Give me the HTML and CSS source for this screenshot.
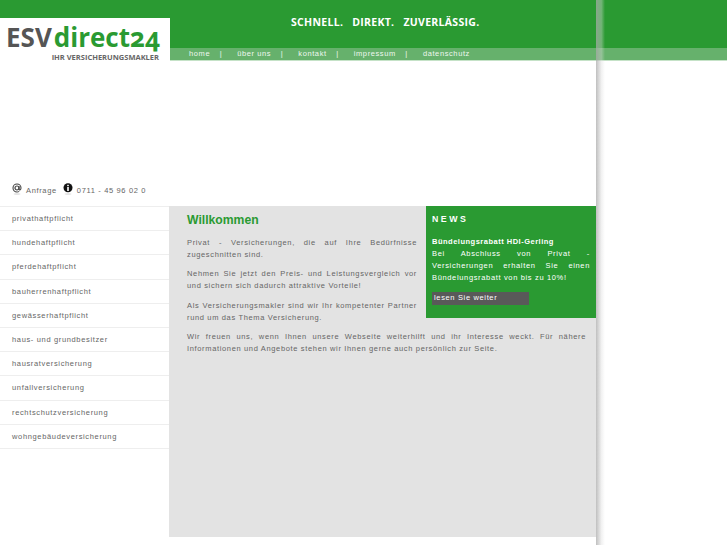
FILE: index.html
```html
<!DOCTYPE html>
<html lang="de">
<head>
    <meta charset="UTF-8">
    <meta name="viewport" content="width=device-width, initial-scale=1.0">
    <title>ESVdirect24</title>
    <link rel="stylesheet" href="styles.css">
</head>
<body>

    <div class="top">
        <div class="logo">
            <div class="logo-name"><span class="logo-esv">ESV</span><span class="logo-direct">direct24</span></div>
            <div class="logo-sub">IHR VERSICHERUNGSMAKLER</div>
        </div>
        <div class="top-right">
            <div class="slogan">SCHNELL.<span>DIREKT.</span><span>ZUVERLÄSSIG.</span></div>
            <ul class="topnav">
                <li>home</li>
                <li>über uns</li>
                <li>kontakt</li>
                <li>impressum</li>
                <li>datenschutz</li>
            </ul>
        </div>
    </div>

    <div class="page">
        <div class="contact">
            <svg class="icon" width="10" height="12" viewBox="0 0 10 12">
                <circle cx="5" cy="5" r="2" fill="none" stroke="#444" stroke-width="1.2"/>
                <path d="M7 3v3c0 1.500 2 1.200 2-1C9 2.500 7.200 1 5 1S1 2.700 1 5s1.800 4 4 4c.9 0 1.600-.2 2.200-.6" fill="none" stroke="#444" stroke-width="1.100"/>
                <ellipse cx="5" cy="11" rx="3.500" ry=".8" fill="#ddd"/>
            </svg>
            <span class="anfrage">Anfrage</span>
            <svg class="icon" width="10" height="12" viewBox="0 0 10 12">
                <circle cx="5" cy="4.800" r="4.500" fill="#111"/>
                <rect x="4.200" y="4" width="1.600" height="4" fill="#fff"/>
                <rect x="4.200" y="1.800" width="1.600" height="1.400" fill="#fff"/>
                <ellipse cx="5" cy="11" rx="3.500" ry=".8" fill="#ddd"/>
            </svg>
            <span class="phone">0711 - 45 96 02 0</span>
        </div>

        <div class="columns">
            <ul class="sidenav">
                <li>privathaftpflicht</li>
                <li>hundehaftpflicht</li>
                <li>pferdehaftpflicht</li>
                <li>bauherrenhaftpflicht</li>
                <li>gewässerhaftpflicht</li>
                <li>haus- und grundbesitzer</li>
                <li>hausratversicherung</li>
                <li>unfallversicherung</li>
                <li>rechtschutzversicherung</li>
                <li>wohngebäudeversicherung</li>
            </ul>

            <div class="content">
                <div class="news">
                    <h3>NEWS</h3>
                    <p><strong>Bündelungsrabatt HDI-Gerling</strong><br>Bei Abschluss von Privat - Versicherungen erhalten Sie einen Bündelungsrabatt von bis zu 10%!</p>
                    <div class="more">lesen Sie weiter</div>
                </div>
                <h1>Willkommen</h1>
                <p>Privat - Versicherungen, die auf Ihre Bedürfnisse zugeschnitten sind.</p>
                <p>Nehmen Sie jetzt den Preis- und Leistungsvergleich vor und sichern sich dadurch attraktive Vorteile!</p>
                <p>Als Versicherungsmakler sind wir Ihr kompetenter Partner rund um das Thema Versicherung.</p>
                <p>Wir freuen uns, wenn Ihnen unsere Webseite weiterhilft und ihr Interesse weckt. Für nähere Informationen und Angebote stehen wir Ihnen gerne auch persönlich zur Seite.</p>
            </div>
        </div>
        <div class="shadow"></div>
    </div>

</body>
</html>
```

FILE: styles.css
```css
html, body {
    margin: 0;
    padding: 0;
    height: 100%;
    overflow: hidden;
}

body {
    background-color: white;
    color: #666;
    font-family: "Liberation Sans", Arial, sans-serif;
    font-size: 7.500px;
    letter-spacing: .65px;
    position: relative;
}

ul {
    list-style: none;
    margin: 0;
    padding: 0;
}

/* header */
.top {
    display: flex;
    height: 61px;
    background-color: #2a9a32;
}

.logo {
    width: 170px;
    margin-top: 18px;
    background-color: white;
    letter-spacing: 0;
    box-sizing: border-box;
    padding: 5px 11px 0 6px;
}

.logo-name {
    font-family: "Open Sans", sans-serif;
    font-weight: 700;
    font-size: 26px;
    line-height: 29px;
    white-space: nowrap;
    font-feature-settings: "onum";
}

.logo-esv {
    color: #555;
    margin-right: 2px;
}

.logo-direct {
    color: #2a9a32;
}

.logo-sub {
    font-family: "Open Sans", sans-serif;
    font-weight: 700;
    font-size: 7.500px;
    line-height: 10px;
    color: #666;
    text-align: right;
}

.top-right {
    flex: 1;
    display: flex;
    flex-direction: column;
}

.slogan {
    height: 48px;
    box-sizing: border-box;
    padding: 15px 0 0 121px;
    color: white;
    font-family: "Open Sans", sans-serif;
    font-weight: 700;
    font-size: 10.500px;
    line-height: 15px;
    letter-spacing: .3px;
}

.slogan span {
    margin-left: 9px;
}

.topnav {
    display: flex;
    height: 12px;
    padding-left: 19px;
    background-color: #66b16c;
    color: #eef7ef;
    line-height: 12px;
    letter-spacing: .6px;
    border-bottom: 1px solid #c5e2c7;
}

.topnav li {
    margin-right: 15px;
}

.topnav li:not(:last-child)::after {
    content: "|";
    margin-left: 9.500px;
}

/* page */
.page {
    width: 596px;
    position: relative;
    height: 484px;
}

.shadow {
    position: absolute;
    top: -61px;
    bottom: 0;
    left: 596px;
    width: 9px;
    background: linear-gradient(to right, rgba(170, 170, 170, .75), rgba(220, 220, 220, .4) 60%, rgba(255, 255, 255, 0));
}

.contact {
    height: 145px;
    box-sizing: border-box;
    padding: 122px 0 0 12px;
    display: flex;
    align-items: flex-start;
}

.icon {
    margin-right: 4px;
}

.anfrage {
    margin: 3px 6px 0 0;
}

.phone {
    margin: 3px 0 0;
}

.columns {
    display: flex;
    height: 331px;
}

.sidenav {
    width: 169px;
    flex-shrink: 0;
    border-top: 1px solid #eee;
    height: 242px;
}

.sidenav li {
    height: 23.200px;
    line-height: 24px;
    padding-left: 12px;
    border-bottom: 1px solid #eee;
}

.content {
    flex: 1;
    background-color: #e3e3e3;
    padding: 0 10px 0 18px;
    line-height: 12px;
}

.content h1 {
    margin: 0 0 2px;
    padding-top: 6px;
    height: 23px;
    color: #2a9a32;
    font-size: 12.200px;
    line-height: 16px;
    letter-spacing: 0;
}

.content p {
    margin: 0 0 7.300px;
    text-align: justify;
}

.news {
    float: right;
    width: 170px;
    height: 112px;
    margin: 0 -10px 8px 9px;
    box-sizing: border-box;
    padding: 7px 6px 0;
    background-color: #2a9a32;
    color: white;
}

.news h3 {
    margin: 0 0 11px;
    line-height: 12px;
    letter-spacing: 2.500px;
}

.news p {
    margin-bottom: 8px;
}

.news strong {
    letter-spacing: .5px;
}

.more {
    width: 95px;
    height: 13px;
    padding-left: 2px;
    background-color: #595959;
    line-height: 12px;
}
```
